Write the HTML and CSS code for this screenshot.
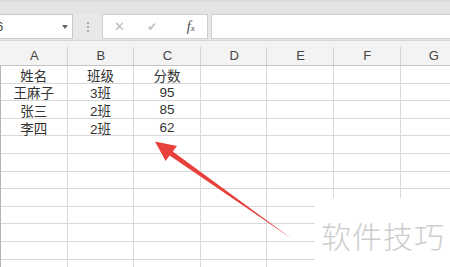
FILE: index.html
```html
<!DOCTYPE html>
<html>
  <head>
    <meta charset="utf-8">
    <title>sheet</title>
    <link rel="stylesheet" href="styles.css">
  </head>
  <body>
    <div id="page">
      <div class="topband"></div>

      <!-- 名称框 + 编辑栏 -->
      <div class="formulaBar">
        <div class="nameBox">
          <span class="nameText">6</span>
          <span class="dropArrow"></span>
        </div>
        <div class="grip"><i></i><i></i><i></i></div>
        <div class="btnBox">
          <span class="fbtn">&#x2715;</span>
          <span class="fbtn check">&#x2714;</span>
          <span class="fbtn fx">f<sub>x</sub></span>
        </div>
        <div class="inputBox"></div>
      </div>

      <div class="colHead">
        <div class="hcell">A</div>
        <div class="hcell">B</div>
        <div class="hcell">C</div>
        <div class="hcell">D</div>
        <div class="hcell">E</div>
        <div class="hcell">F</div>
        <div class="hcell">G</div>
      </div>

      <div class="grid">
        <div class="cell">姓名</div><div class="cell">班级</div><div class="cell">分数</div><div class="cell"></div><div class="cell"></div><div class="cell"></div><div class="cell"></div>
        <div class="cell">王麻子</div><div class="cell">3班</div><div class="cell">95</div><div class="cell"></div><div class="cell"></div><div class="cell"></div><div class="cell"></div>
        <div class="cell">张三</div><div class="cell">2班</div><div class="cell">85</div><div class="cell"></div><div class="cell"></div><div class="cell"></div><div class="cell"></div>
        <div class="cell">李四</div><div class="cell">2班</div><div class="cell">62</div><div class="cell"></div><div class="cell"></div><div class="cell"></div><div class="cell"></div>
        <div class="cell"></div><div class="cell"></div><div class="cell"></div><div class="cell"></div><div class="cell"></div><div class="cell"></div><div class="cell"></div>
        <div class="cell"></div><div class="cell"></div><div class="cell"></div><div class="cell"></div><div class="cell"></div><div class="cell"></div><div class="cell"></div>
        <div class="cell"></div><div class="cell"></div><div class="cell"></div><div class="cell"></div><div class="cell"></div><div class="cell"></div><div class="cell"></div>
        <div class="cell"></div><div class="cell"></div><div class="cell"></div><div class="cell"></div><div class="cell"></div><div class="cell"></div><div class="cell"></div>
        <div class="cell"></div><div class="cell"></div><div class="cell"></div><div class="cell"></div><div class="cell"></div><div class="cell"></div><div class="cell"></div>
        <div class="cell"></div><div class="cell"></div><div class="cell"></div><div class="cell"></div><div class="cell"></div><div class="cell"></div><div class="cell"></div>
        <div class="cell"></div><div class="cell"></div><div class="cell"></div><div class="cell"></div><div class="cell"></div><div class="cell"></div><div class="cell"></div>
        <div class="cell"></div><div class="cell"></div><div class="cell"></div><div class="cell"></div><div class="cell"></div><div class="cell"></div><div class="cell"></div>
      </div>

      <!-- 红色箭头 -->
      <svg class="arrow" width="450" height="267" viewBox="0 0 450 267">
        <polygon fill="#e8403a" points="155,141.5 177,146 172.8,151.6 291.5,238.6 169.6,155.6 165.6,161"/>
      </svg>

      <div class="watermark">软件技巧</div>
    </div>
  </body>
</html>
```

FILE: styles.css
```css
body {
  margin: 0;
  overflow: hidden;
}
#page {
  position: relative;
  width: 450px;
  height: 267px;
  overflow: hidden;
  background: #fff;
  font-family: "Liberation Sans", "Noto Sans CJK SC", sans-serif;
  color: #333;
}

.topband {
  height: 14px;
  background: #e4e4e4;
  border-top: 2px solid #dcdcdc;
  box-sizing: border-box;
}

.formulaBar {
  display: flex;
  align-items: stretch;
  height: 26px;
  padding: 0 0 1px 0;
  box-sizing: border-box;
  background: #e8e8e8;
}
.nameBox {
  display: flex;
  align-items: center;
  justify-content: space-between;
  width: 75px;
  margin-left: -2px;
  padding: 0 4px 0 0;
  box-sizing: border-box;
  background: #fff;
  border: 1px solid #c9c9c9;
}
.nameText {
  font-size: 13px;
  color: #444;
  margin-left: -3px;
}
.dropArrow {
  width: 0;
  height: 0;
  border-left: 3px solid transparent;
  border-right: 3px solid transparent;
  border-top: 4px solid #666;
}
.grip {
  width: 29px;
  display: flex;
  flex-direction: column;
  align-items: center;
  justify-content: center;
  gap: 2px;
}
.grip i {
  display: block;
  width: 2px;
  height: 2px;
  background: #a8a8a8;
}
.btnBox {
  width: 106px;
  display: flex;
  align-items: center;
  background: #fff;
  border: 1px solid #cfcfcf;
  box-sizing: border-box;
}
.fbtn {
  width: 33px;
  text-align: center;
  font-size: 13px;
  color: #bdbdbd;
  font-family: "DejaVu Sans", sans-serif;
}
.fbtn.check {
  font-size: 12px;
  color: #c4c4c4;
}
.fbtn.fx {
  font-family: "Liberation Serif", serif;
  font-style: italic;
  color: #4a4a4a;
  font-size: 14px;
  padding-left: 6px;
}
.fbtn.fx sub {
  font-size: 9px;
  vertical-align: 0;
}
.inputBox {
  flex: 1;
  margin-left: 3px;
  background: #fff;
  border: 1px solid #cfcfcf;
  border-right: none;
}

.colHead {
  display: grid;
  grid-template-columns: repeat(7, 66.6px);
  height: 26px;
  padding-left: 1px;
  background: #f3f3f3;
  border-top: 1px solid #d6d6d6;
  border-bottom: 1px solid #c4c4c4;
  box-sizing: border-box;
}
.hcell {
  display: flex;
  align-items: flex-end;
  justify-content: center;
  padding-bottom: 2px;
  font-size: 13px;
  color: #444;
  background: linear-gradient(#d2d2d2, #d2d2d2) right bottom / 1px 18px no-repeat;
}

.grid {
  display: grid;
  grid-template-columns: repeat(7, 66.6px);
  grid-auto-rows: 17.6px;
  border-left: 1px solid #b4b4b4;
}
.cell {
  display: flex;
  align-items: center;
  justify-content: center;
  border-right: 1px solid #d9d9d9;
  border-bottom: 1px solid #d9d9d9;
  box-sizing: border-box;
  font-size: 13.5px;
  font-family: "Liberation Sans", "Noto Sans CJK SC", sans-serif;
  color: #333;
  padding-top: 1px;
}

.arrow {
  position: absolute;
  left: 0;
  top: 0;
}

.watermark {
  position: absolute;
  right: 0;
  bottom: 0;
  width: 135px;
  height: 69px;
  background: #fff;
  box-sizing: border-box;
  padding: 15px 0 0 6px;
  font-family: "Noto Sans CJK SC", sans-serif;
  font-weight: 300;
  font-size: 30px;
  letter-spacing: 1px;
  color: #cdcdcd;
}
```
